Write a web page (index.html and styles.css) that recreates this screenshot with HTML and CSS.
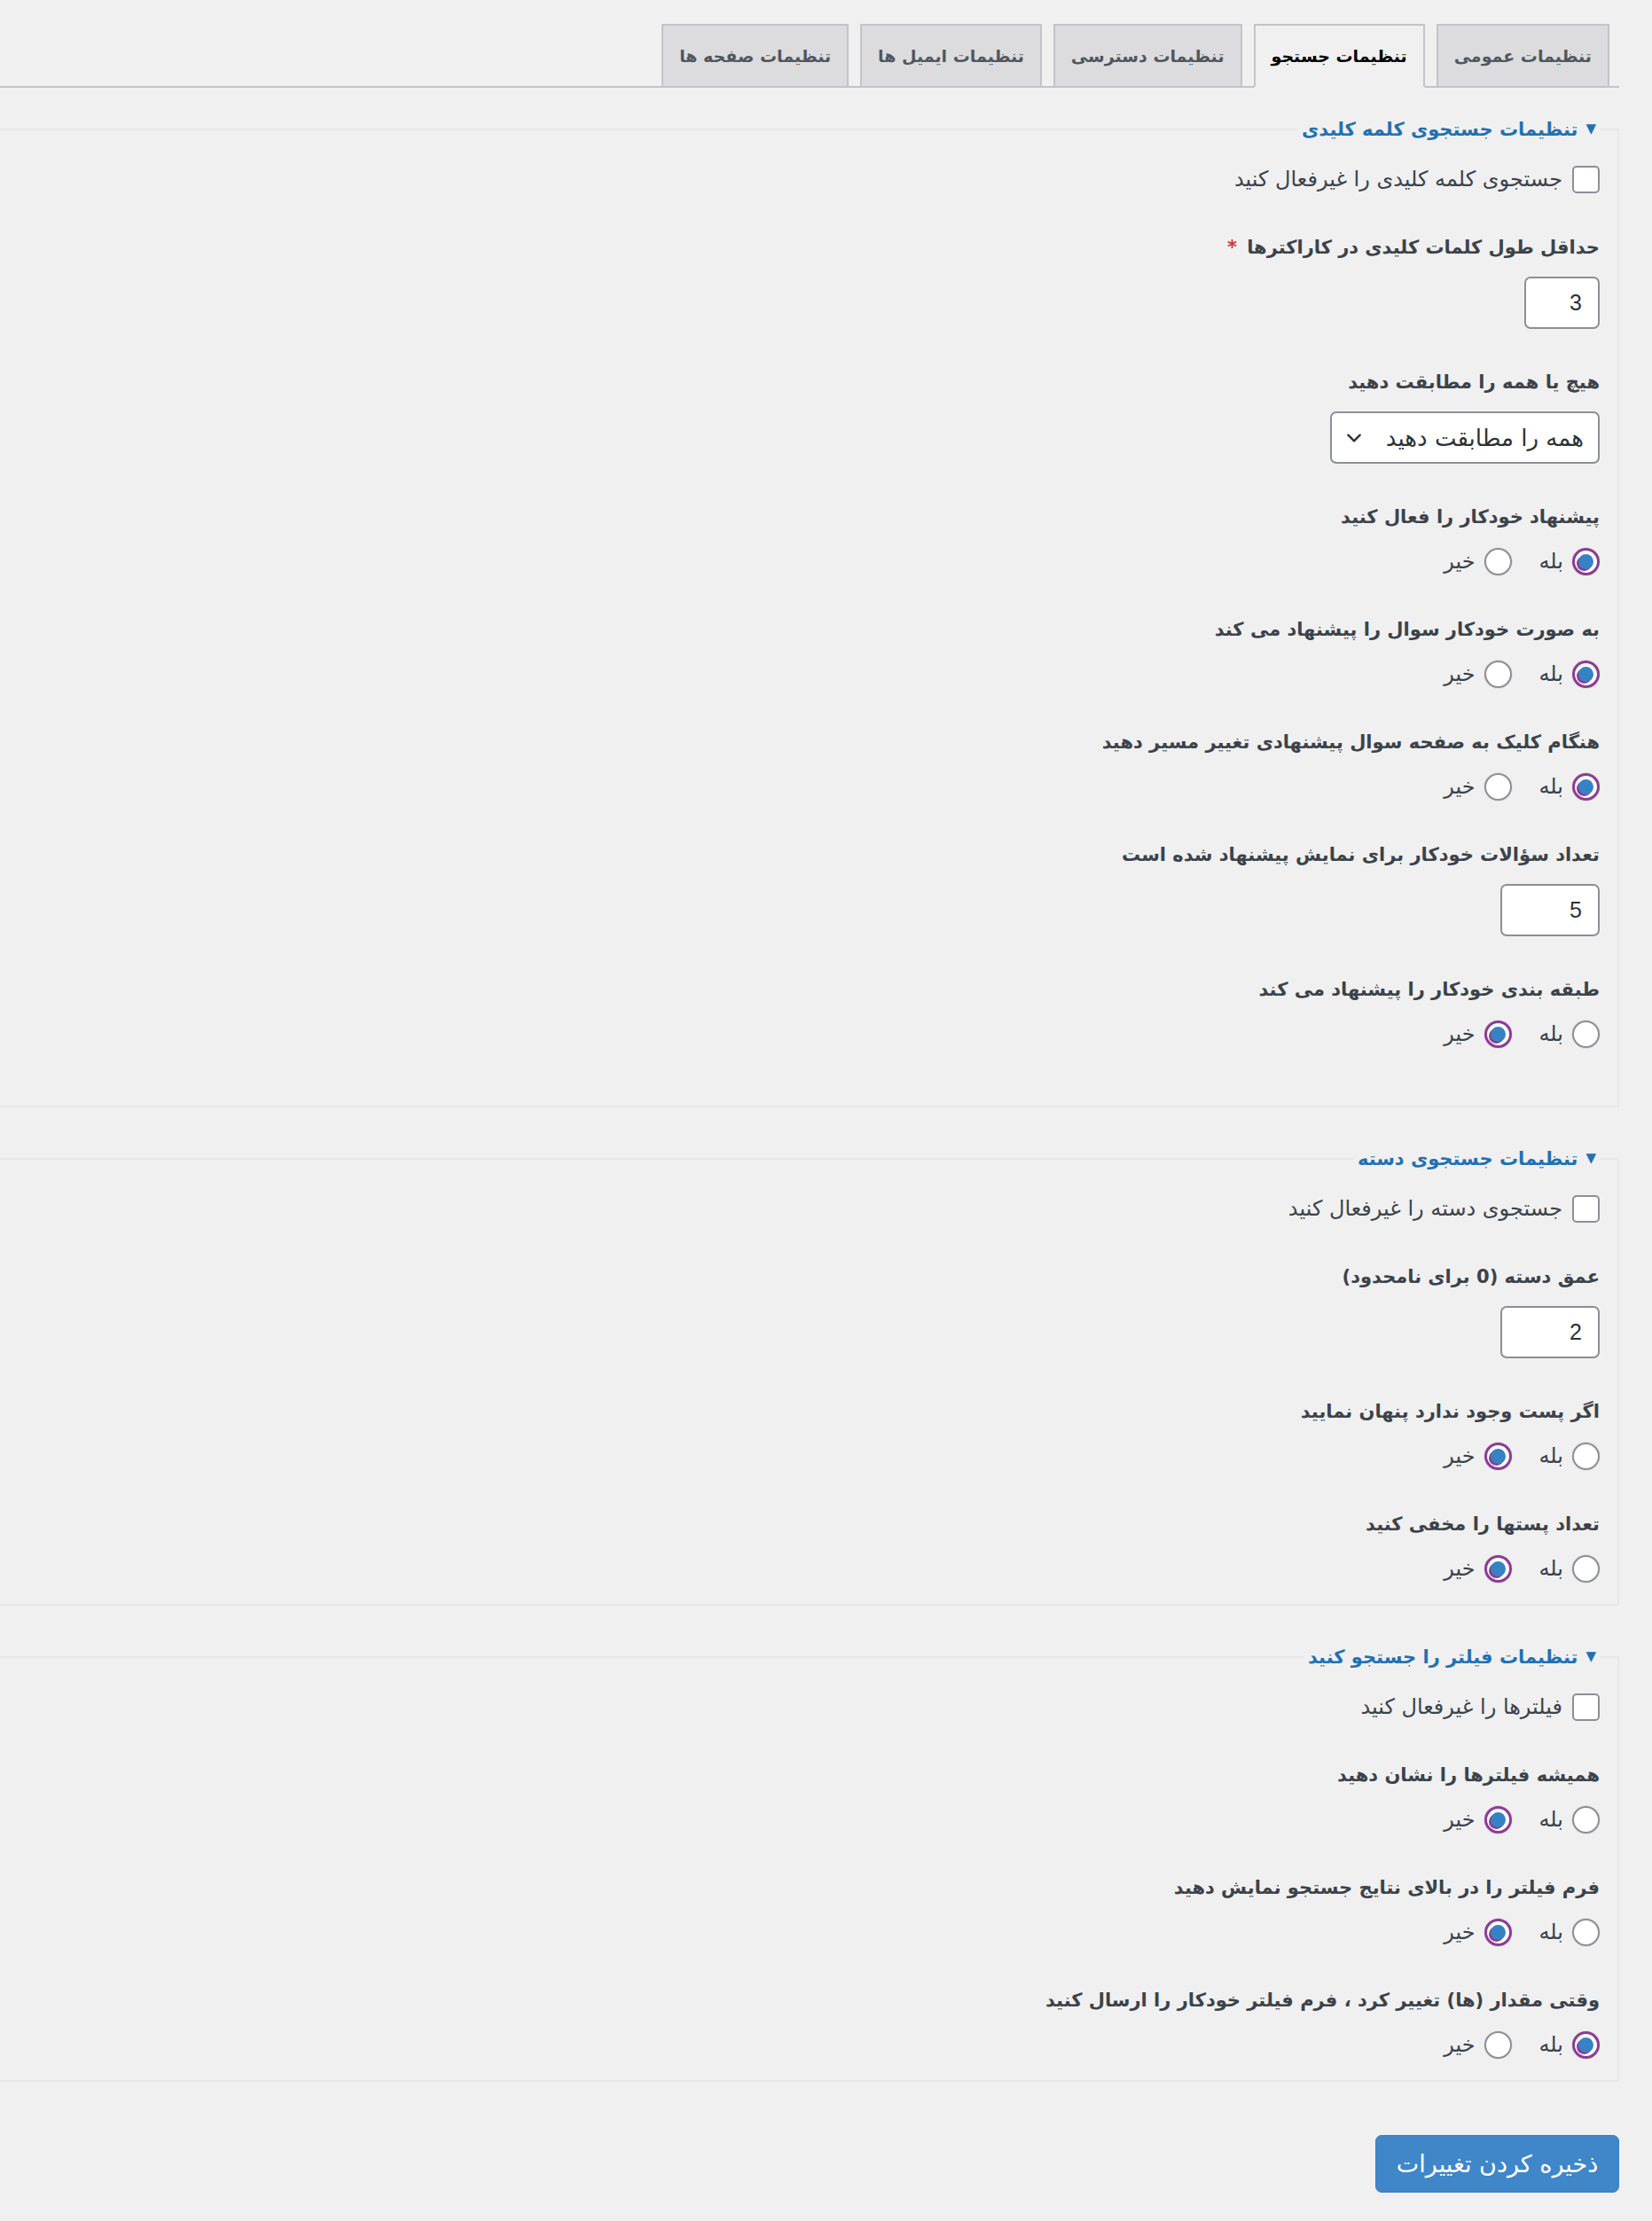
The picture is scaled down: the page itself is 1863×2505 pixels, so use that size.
FILE: index.html
```html
<!DOCTYPE html>
<html lang="fa" dir="rtl">
<head>
<meta charset="utf-8">
<title>تنظیمات جستجو</title>
<link rel="stylesheet" href="styles.css">
</head>
<body>
<div class="wrap">
  <nav class="tabs">
    <a class="tab">تنظیمات عمومی</a>
    <a class="tab active">تنظیمات جستجو</a>
    <a class="tab">تنظیمات دسترسی</a>
    <a class="tab">تنظیمات ایمیل ها</a>
    <a class="tab">تنظیمات صفحه ها</a>
  </nav>

  <form class="settings">
    <fieldset class="section section-first">
      <legend><span class="caret">▼</span>تنظیمات جستجوی کلمه کلیدی</legend>
      <label class="check"><span class="box"></span>جستجوی کلمه کلیدی را غیرفعال کنید</label>

      <div class="field">
        <div class="label">حداقل طول کلمات کلیدی در کاراکترها <span class="req">*</span></div>
        <div class="input num-s">3</div>
      </div>

      <div class="field">
        <div class="label">هیچ یا همه را مطابقت دهید</div>
        <div class="input select"><span>همه را مطابقت دهید</span>
          <svg class="chev" viewBox="0 0 20 20" width="22" height="22"><path d="M4 7l6 6 6-6" fill="none" stroke="#2c3338" stroke-width="2.2" stroke-linecap="round" stroke-linejoin="round"/></svg>
        </div>
      </div>

      <div class="field">
        <div class="label">پیشنهاد خودکار را فعال کنید</div>
        <div class="radios"><span class="opt"><span class="radio on"></span>بله</span><span class="opt"><span class="radio"></span>خیر</span></div>
      </div>

      <div class="field">
        <div class="label">به صورت خودکار سوال را پیشنهاد می کند</div>
        <div class="radios"><span class="opt"><span class="radio on"></span>بله</span><span class="opt"><span class="radio"></span>خیر</span></div>
      </div>

      <div class="field">
        <div class="label">هنگام کلیک به صفحه سوال پیشنهادی تغییر مسیر دهید</div>
        <div class="radios"><span class="opt"><span class="radio on"></span>بله</span><span class="opt"><span class="radio"></span>خیر</span></div>
      </div>

      <div class="field">
        <div class="label">تعداد سؤالات خودکار برای نمایش پیشنهاد شده است</div>
        <div class="input num-m">5</div>
      </div>

      <div class="field">
        <div class="label">طبقه بندی خودکار را پیشنهاد می کند</div>
        <div class="radios"><span class="opt"><span class="radio"></span>بله</span><span class="opt"><span class="radio on"></span>خیر</span></div>
      </div>
    </fieldset>

    <fieldset class="section">
      <legend><span class="caret">▼</span>تنظیمات جستجوی دسته</legend>
      <label class="check"><span class="box"></span>جستجوی دسته را غیرفعال کنید</label>

      <div class="field">
        <div class="label">عمق دسته (0 برای نامحدود)</div>
        <div class="input num-m">2</div>
      </div>

      <div class="field">
        <div class="label">اگر پست وجود ندارد پنهان نمایید</div>
        <div class="radios"><span class="opt"><span class="radio"></span>بله</span><span class="opt"><span class="radio on"></span>خیر</span></div>
      </div>

      <div class="field">
        <div class="label">تعداد پستها را مخفی کنید</div>
        <div class="radios"><span class="opt"><span class="radio"></span>بله</span><span class="opt"><span class="radio on"></span>خیر</span></div>
      </div>
    </fieldset>

    <fieldset class="section">
      <legend><span class="caret">▼</span>تنظیمات فیلتر را جستجو کنید</legend>
      <label class="check"><span class="box"></span>فیلترها را غیرفعال کنید</label>

      <div class="field">
        <div class="label">همیشه فیلترها را نشان دهید</div>
        <div class="radios"><span class="opt"><span class="radio"></span>بله</span><span class="opt"><span class="radio on"></span>خیر</span></div>
      </div>

      <div class="field">
        <div class="label">فرم فیلتر را در بالای نتایج جستجو نمایش دهید</div>
        <div class="radios"><span class="opt"><span class="radio"></span>بله</span><span class="opt"><span class="radio on"></span>خیر</span></div>
      </div>

      <div class="field">
        <div class="label">وقتی مقدار (ها) تغییر کرد ، فرم فیلتر خودکار را ارسال کنید</div>
        <div class="radios"><span class="opt"><span class="radio on"></span>بله</span><span class="opt"><span class="radio"></span>خیر</span></div>
      </div>
    </fieldset>

    <div class="actions">
      <button type="button" class="primary">ذخیره کردن تغییرات</button>
    </div>
  </form>
</div>
</body>
</html>
```

FILE: styles.css
```css
html, body {
  margin: 0;
  padding: 0;
  background: #f0f0f1;
}
body {
  font-family: "DejaVu Sans", "Noto Sans", sans-serif;
  color: #3c434a;
  font-size: 24px;
  min-height: 2505px;
}
.wrap {
  margin-right: 37px;
  margin-left: 0;
  padding-top: 27px;
}

/* tabs */
.tabs {
  display: flex;
  align-items: flex-end;
  gap: 13px;
  padding-right: 11px;
  border-bottom: 2px solid #c3c4c7;
  height: 70px;
}
.tab {
  box-sizing: border-box;
  height: 72px;
  margin-bottom: -2px;
  padding: 0 18px;
  display: flex;
  align-items: center;
  background: #dcdcde;
  border: 2px solid #c3c4c7;
  color: #50575e;
  font-weight: bold;
  font-size: 19px;
  white-space: nowrap;
}
.tab.active {
  background: #f0f0f1;
  border-bottom-color: #f0f0f1;
  color: #000;
}

/* sections */
.settings {
  padding-top: 29px;
}
.section {
  margin: 0 0 40px 0;
  padding: 22px 20px 23px 20px;
  border: 2px solid #e7e7e8;
  border-left: 0;
  display: flex;
  flex-direction: column;
  gap: 43px;
  min-width: 0;
}
.section-first {
  padding-bottom: 64px;
}
legend {
  padding: 0 4px;
  color: #2271b1;
  font-weight: bold;
  font-size: 21px;
  line-height: 34px;
}
.caret {
  font-size: 15px;
  margin-left: 9px;
  vertical-align: 3px;
}

.check {
  display: flex;
  align-items: center;
  gap: 11px;
  height: 34px;
}
.box {
  box-sizing: border-box;
  width: 31px;
  height: 31px;
  background: #fff;
  border: 2px solid #8c8f94;
  border-radius: 5px;
  flex: none;
}

.field {
  display: flex;
  flex-direction: column;
  align-items: flex-start;
  gap: 16px;
}
.label {
  font-weight: bold;
  font-size: 21px;
  line-height: 34px;
  color: #3c434a;
}
.req {
  color: #d63638;
  margin-right: 4px;
}

.input {
  box-sizing: border-box;
  height: 59px;
  background: #fff;
  border: 2px solid #8c8f94;
  border-radius: 7px;
  display: flex;
  align-items: center;
  padding: 0 18px;
  font-family: "Liberation Sans", Arial, sans-serif;
  font-size: 25px;
  color: #2c3338;
}
.num-s { width: 85px; }
.num-m { width: 112px; }
.select {
  width: 304px;
  justify-content: space-between;
  font-family: "DejaVu Sans", sans-serif;
  font-size: 26px;
  padding: 0 16px 0 14px;
}
.chev { flex: none; }

.radios {
  display: flex;
  align-items: center;
  gap: 31px;
  height: 34px;
}
.opt {
  display: flex;
  align-items: center;
  gap: 10px;
}
.radio {
  box-sizing: border-box;
  position: relative;
  width: 31px;
  height: 31px;
  border-radius: 50%;
  background: #fff;
  border: 2px solid #8c8f94;
  box-shadow: 0 0 0 1px #e4e4e5;
  flex: none;
}
.radio.on {
  border: 3px solid #8b3c95;
}
.radio.on::before {
  content: "";
  position: absolute;
  width: 17px;
  height: 17px;
  border-radius: 50%;
  background: #3582c4;
  top: 4px;
  right: 4px;
  box-shadow: -2px 2px 0 #8b3c95;
}

.actions {
  display: flex;
  justify-content: flex-start;
  padding-top: 20px;
}
.primary {
  box-sizing: border-box;
  width: 275px;
  height: 65px;
  background: #3f87c9;
  border: 1px solid #3a81c2;
  border-radius: 7px;
  color: #fff;
  font-family: "DejaVu Sans", sans-serif;
  font-size: 27px;
  cursor: pointer;
}
```
